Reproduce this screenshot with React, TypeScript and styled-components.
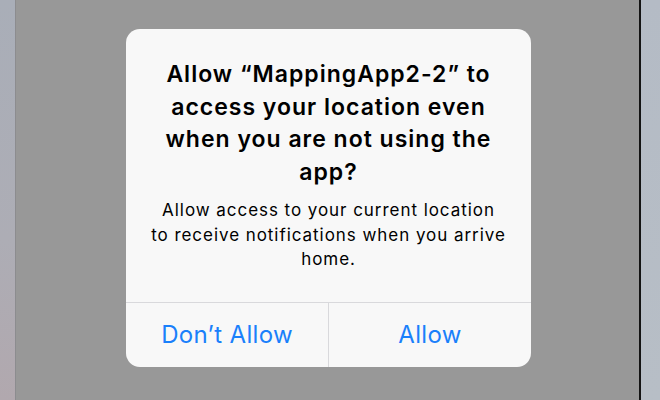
import React from "react";
import styled, { createGlobalStyle } from "styled-components";

const Global = createGlobalStyle`
  html, body { margin: 0; padding: 0; }
  body { width: 660px; height: 400px; overflow: hidden; font-family: Inter, "Liberation Sans", sans-serif; }
  #root { width: 660px; height: 400px; }
`;

const Screen = styled.div`
  display: flex;
  width: 660px;
  height: 400px;
`;

const EdgeLeft = styled.div`
  width: 15px;
  background: linear-gradient(180deg, #a9aeb8 0%, #adadb5 60%, #b1a8ae 100%);
`;

const EdgeRight = styled.div`
  width: 19px;
  background: linear-gradient(180deg, #b4bbc5 0%, #b7bec6 100%);
`;

const Rule = styled.div<{ $w: number; $c: string }>`
  width: ${(p) => p.$w}px;
  background: ${(p) => p.$c};
`;

const Backdrop = styled.div`
  flex: 1;
  background: #989898;
  display: flex;
  justify-content: center;
  align-items: flex-start;
  padding: 29px 0 0 2px;
  box-sizing: border-box;
`;

const Alert = styled.div`
  width: 405px;
  background: #f8f8f8;
  border-radius: 14px;
  overflow: hidden;
  display: flex;
  flex-direction: column;
`;

const Body = styled.div`
  padding: 29px 0 30px;
  display: flex;
  flex-direction: column;
  gap: 10px;
  text-align: center;
  color: #000;
`;

const Title = styled.div`
  font-size: 23px;
  font-weight: 600;
  line-height: 32.5px;
  letter-spacing: 1px;
  padding: 0 32px;
`;

const Message = styled.div`
  font-size: 17px;
  line-height: 24.5px;
  font-weight: 400;
  letter-spacing: 0.95px;
  padding: 0 12px;
`;

const Buttons = styled.div`
  display: flex;
  border-top: 1px solid #d9d9dc;
  height: 64px;
`;

const Button = styled.div<{ $divider?: boolean }>`
  flex: 1;
  display: flex;
  align-items: center;
  justify-content: center;
  color: #1a80fb;
  font-size: 24px;
  font-weight: 400;
  letter-spacing: 0.3px;
  border-right: ${(p) => (p.$divider ? "1px solid #d9d9dc" : "none")};
`;

export default function App() {
  return (
    <>
      <Global />
      <Screen>
        <EdgeLeft />
        <Rule $w={1} $c="#8c8c8f" />
        <Backdrop>
          <Alert>
            <Body>
              <Title>
                Allow “MappingApp2-2” to access your location even when you are not using the app?
              </Title>
              <Message>
                Allow access to your current location
                <br />
                to receive notifications when you arrive
                <br />
                home.
              </Message>
            </Body>
            <Buttons>
              <Button $divider>Don’t Allow</Button>
              <Button>Allow</Button>
            </Buttons>
          </Alert>
        </Backdrop>
        <Rule $w={2} $c="#141414" />
        <EdgeRight />
      </Screen>
    </>
  );
}
